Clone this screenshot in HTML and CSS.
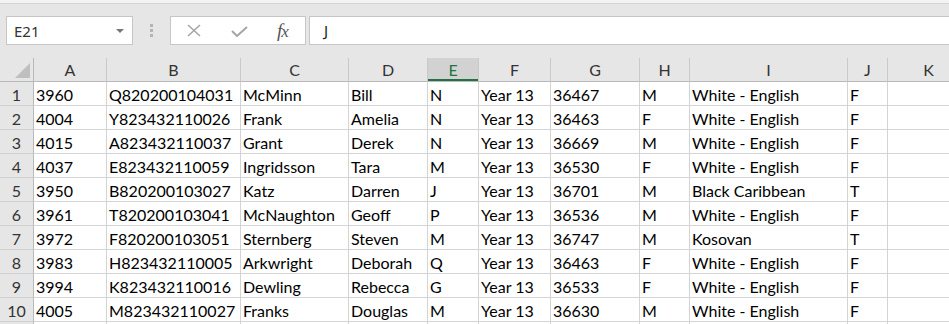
FILE: index.html
```html
<!DOCTYPE html>
<html>
  <head>
    <meta charset="UTF-8" />
    <title>Students - Excel</title>
    <link rel="stylesheet" href="styles.css">
  </head>
  <body>
    <div class="ribbon-edge"></div>

    <div class="formula-row">
      <div class="name-box">
        <span>E21</span>
        <span class="drop-arrow"></span>
      </div>
      <div class="grip">
        <i></i><i></i><i></i>
      </div>
      <div class="fx-buttons">
        <svg class="btn-cancel" width="16" height="13" viewBox="0 0 16 13">
          <path d="M2 1 L14 12 M14 1 L2 12" stroke="#a6a6a6" stroke-width="1.6" fill="none" />
        </svg>
        <svg class="btn-enter" width="17" height="11" viewBox="0 0 17 11">
          <path d="M1 5 L6 10 L16 1" stroke="#a6a6a6" stroke-width="2" fill="none" />
        </svg>
        <span class="fx"><b>f</b>x</span>
      </div>
      <div class="formula-input">J</div>
    </div>

    <div class="sheet">
      <div class="hd corner"><span class="corner-tri"></span></div>
      <div class="hd">A</div>
      <div class="hd">B</div>
      <div class="hd">C</div>
      <div class="hd">D</div>
      <div class="hd hd-active">E</div>
      <div class="hd">F</div>
      <div class="hd">G</div>
      <div class="hd">H</div>
      <div class="hd">I</div>
      <div class="hd">J</div>
      <div class="hd">K</div>

      <div class="rn">1</div><div class="c">3960</div><div class="c">Q820200104031</div><div class="c">McMinn</div><div class="c">Bill</div><div class="c">N</div><div class="c">Year 13</div><div class="c">36467</div><div class="c">M</div><div class="c">White - English</div><div class="c">F</div><div class="c"></div>
      <div class="rn">2</div><div class="c">4004</div><div class="c">Y823432110026</div><div class="c">Frank</div><div class="c">Amelia</div><div class="c">N</div><div class="c">Year 13</div><div class="c">36463</div><div class="c">F</div><div class="c">White - English</div><div class="c">F</div><div class="c"></div>
      <div class="rn">3</div><div class="c">4015</div><div class="c">A823432110037</div><div class="c">Grant</div><div class="c">Derek</div><div class="c">N</div><div class="c">Year 13</div><div class="c">36669</div><div class="c">M</div><div class="c">White - English</div><div class="c">F</div><div class="c"></div>
      <div class="rn">4</div><div class="c">4037</div><div class="c">E823432110059</div><div class="c">Ingridsson</div><div class="c">Tara</div><div class="c">M</div><div class="c">Year 13</div><div class="c">36530</div><div class="c">F</div><div class="c">White - English</div><div class="c">F</div><div class="c"></div>
      <div class="rn">5</div><div class="c">3950</div><div class="c">B820200103027</div><div class="c">Katz</div><div class="c">Darren</div><div class="c">J</div><div class="c">Year 13</div><div class="c">36701</div><div class="c">M</div><div class="c">Black Caribbean</div><div class="c">T</div><div class="c"></div>
      <div class="rn">6</div><div class="c">3961</div><div class="c">T820200103041</div><div class="c">McNaughton</div><div class="c">Geoff</div><div class="c">P</div><div class="c">Year 13</div><div class="c">36536</div><div class="c">M</div><div class="c">White - English</div><div class="c">F</div><div class="c"></div>
      <div class="rn">7</div><div class="c">3972</div><div class="c">F820200103051</div><div class="c">Sternberg</div><div class="c">Steven</div><div class="c">M</div><div class="c">Year 13</div><div class="c">36747</div><div class="c">M</div><div class="c">Kosovan</div><div class="c">T</div><div class="c"></div>
      <div class="rn">8</div><div class="c">3983</div><div class="c">H823432110005</div><div class="c">Arkwright</div><div class="c">Deborah</div><div class="c">Q</div><div class="c">Year 13</div><div class="c">36463</div><div class="c">F</div><div class="c">White - English</div><div class="c">F</div><div class="c"></div>
      <div class="rn">9</div><div class="c">3994</div><div class="c">K823432110016</div><div class="c">Dewling</div><div class="c">Rebecca</div><div class="c">G</div><div class="c">Year 13</div><div class="c">36533</div><div class="c">F</div><div class="c">White - English</div><div class="c">F</div><div class="c"></div>
      <div class="rn">10</div><div class="c">4005</div><div class="c">M823432110027</div><div class="c">Franks</div><div class="c">Douglas</div><div class="c">M</div><div class="c">Year 13</div><div class="c">36630</div><div class="c">M</div><div class="c">White - English</div><div class="c">F</div><div class="c"></div>
      <div class="rn"></div><div class="c"></div><div class="c"></div><div class="c"></div><div class="c"></div><div class="c"></div><div class="c"></div><div class="c"></div><div class="c"></div><div class="c"></div><div class="c"></div><div class="c"></div>
    </div>
  </body>
</html>
```

FILE: styles.css
```css
body {
  margin: 0;
  width: 949px;
  height: 324px;
  overflow: hidden;
  background: #fff;
  font-family: "Noto Sans", sans-serif;
}
.ribbon-edge {
  height: 3px;
  background: #f3f3f3;
  border-bottom: 1px solid #d4d4d4;
}
.formula-row {
  display: flex;
  height: 54px;
  box-sizing: border-box;
  padding-top: 12px;
  background: #e6e6e6;
}
.name-box,
.fx-buttons,
.formula-input {
  height: 29px;
  box-sizing: border-box;
  border: 1px solid #c6c6c6;
  background: #fff;
}
.name-box {
  margin-left: 6px;
  width: 127px;
  display: flex;
  align-items: center;
  justify-content: space-between;
  padding: 0 8px 0 7px;
  font-size: 15px;
  color: #333;
}
.drop-arrow {
  width: 0;
  height: 0;
  border-left: 4px solid transparent;
  border-right: 4px solid transparent;
  border-top: 4px solid #777;
}
.grip {
  width: 37px;
  display: flex;
  flex-direction: column;
  align-items: center;
  justify-content: center;
  gap: 2px;
  height: 29px;
}
.grip i {
  width: 3px;
  height: 3px;
  background: #b4b4b4;
}
.fx-buttons {
  width: 136px;
  display: flex;
  align-items: center;
  padding-left: 15px;
}
.btn-cancel {
  margin-right: 29px;
}
.btn-enter {
  margin-top: 2px;
  margin-right: 29px;
}
.fx {
  font-family: "Liberation Serif", serif;
  font-style: italic;
  font-size: 17px;
  color: #555;
  letter-spacing: -1px;
}
.fx b {
  font-weight: normal;
  font-size: 19px;
}
.formula-input {
  margin-left: 3px;
  flex: 1;
  border-right: none;
  padding-left: 14px;
  font-size: 15px;
  line-height: 27px;
  color: #222;
}
.sheet {
  display: grid;
  grid-template-columns: 34px 73px 134px 108px 79px 51px 72px 89px 50px 158px 40px 82px;
  font-family: Lato, sans-serif;
  font-size: 16px;
}
.sheet > div {
  height: 24px;
  box-sizing: border-box;
  white-space: nowrap;
  overflow: hidden;
}
.hd {
  background: #e6e6e6;
  border-right: 1px solid #c9c9c9;
  border-bottom: 1px solid #b9b9b9;
  text-align: center;
  line-height: 23px;
  color: #333;
}
.hd-active {
  background: #d2d2d2;
  color: #217346;
  box-shadow: inset 0 -2px 0 #217346;
}
.corner {
  position: relative;
  border-right-color: #b9b9b9;
}
.corner-tri {
  position: absolute;
  right: 3px;
  bottom: 3px;
  width: 0;
  height: 0;
  border-left: 15px solid transparent;
  border-bottom: 15px solid #bfbfbf;
}
.rn {
  background: #e6e6e6;
  border-right: 1px solid #b9b9b9;
  border-bottom: 1px solid #d0d0d0;
  text-align: center;
  padding-top: 2px;
  line-height: 21px;
  color: #333;
}
.c {
  border-right: 1px solid #d4d4d4;
  border-bottom: 1px solid #d4d4d4;
  padding: 2px 0 0 2px;
  line-height: 21px;
  color: #000;
}
```
